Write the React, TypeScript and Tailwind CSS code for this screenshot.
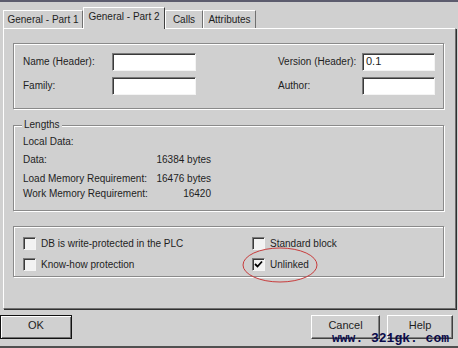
import React from "react";

const etched =
  "border border-[#8a8a8a] shadow-[1px_1px_0_#ffffff,inset_1px_1px_0_#ffffff]";
const sunken =
  "border border-t-[#7a7a7a] border-l-[#7a7a7a] border-b-[#f4f4f4] border-r-[#f4f4f4] shadow-[inset_1px_1px_0_#3a3a3a]";
const raised =
  "border border-b-[#404040] border-l-white border-r-[#404040] border-t-white bg-[#d0d0d0] shadow-[inset_-1px_-1px_0_#808080]";

const Field: React.FC<{ value?: string; className: string }> = ({ value, className }) => (
  <div className={`${sunken} ${className} h-[18px] bg-white px-[3px] leading-[15px] text-[11px]`}>
    {value}
  </div>
);

const Check: React.FC<{ label: string; checked?: boolean }> = ({ label, checked }) => (
  <div className="flex h-[13px] items-center gap-[5px]">
    <div className={`${sunken} flex h-[13px] w-[13px] items-center justify-center bg-[#f2f2f2]`}>
      {checked && (
        <svg width="9" height="9" viewBox="0 0 9 9">
          <path d="M1 4 L3.5 6.5 L8 1.5" stroke="#000" strokeWidth="1.8" fill="none" />
        </svg>
      )}
    </div>
    <span>{label}</span>
  </div>
);

const Tab: React.FC<{ label: string; active?: boolean; w: string }> = ({ label, active, w }) =>
  active ? (
    <div
      className={`${w} relative z-10 -mb-px flex h-[22px] items-start justify-center border border-b-0 border-l-white border-t-white border-r-[#404040] bg-[#d0d0d0] pt-[3px]`}
    >
      {label}
    </div>
  ) : (
    <div
      className={`${w} flex h-[18px] items-center justify-center border border-b-0 border-l-white border-t-white border-r-[#707070] bg-[#d0d0d0]`}
    >
      {label}
    </div>
  );

export default function App() {
  return (
    <div
      className="relative flex h-[348px] w-[458px] flex-col overflow-hidden bg-[#d0d0d0] text-[10px] leading-[12px] text-[#1e1e1e]"
      style={{ fontFamily: '"Liberation Sans", Arial, sans-serif' }}
    >
      <div className="h-[2px] bg-[#5c5c6e]" />
      <div className="h-[6px]" />

      {/* tabs */}
      <div className="flex h-[20px] items-end pl-[3px]">
        <Tab label="General - Part 1" w="w-[80px]" />
        <Tab label="General - Part 2" w="w-[82px]" active />
        <Tab label="Calls" w="w-[38px]" />
        <Tab label="Attributes" w="w-[53px]" />
      </div>

      {/* tab page */}
      <div className="ml-[3px] h-[281px] w-[453px] border border-b-[#707070] border-l-white border-r-[#707070] border-t-white px-[9px] pt-[14px] shadow-[1px_1px_0_#303030]">
        {/* header group */}
        <div className={`${etched} h-[66px] w-[431px] pl-[9px] pt-[9px]`}>
          <div className="grid grid-cols-[89px_84px_82px_84px_73px] gap-y-[6px]">
            <div className="flex items-center">Name (Header):</div>
            <Field className="w-[84px]" />
            <div />
            <div className="flex items-center">Version (Header):</div>
            <Field className="w-[73px]" value="0.1" />
            <div className="flex items-center">Family:</div>
            <Field className="w-[84px]" />
            <div />
            <div className="flex items-center">Author:</div>
            <Field className="w-[73px]" />
          </div>
        </div>

        {/* lengths group */}
        <div className={`${etched} relative mt-[16px] h-[86px] w-[431px] pl-[9px] pt-[10px]`}>
          <span className="absolute -top-[7px] left-[8px] bg-[#d0d0d0] px-[2px]">Lengths</span>
          <div className="h-[18px]">Local Data:</div>
          <div className="grid h-[19px] grid-cols-[130px_58px]">
            <span>Data:</span>
            <span className="text-right">16384 bytes</span>
          </div>
          <div className="grid h-[15px] grid-cols-[130px_58px]">
            <span>Load Memory Requirement:</span>
            <span className="text-right">16476 bytes</span>
          </div>
          <div className="grid grid-cols-[130px_58px]">
            <span>Work Memory Requirement:</span>
            <span className="text-right">16420</span>
          </div>
        </div>

        {/* options group */}
        <div className={`${etched} mt-[15px] h-[51px] w-[431px] pl-[9px] pt-[10px]`}>
          <div className="grid grid-cols-[229px_1fr] gap-y-[8px]">
            <Check label="DB is write-protected in the PLC" />
            <Check label="Standard block" />
            <Check label="Know-how protection" />
            <Check label="Unlinked" checked />
          </div>
        </div>
      </div>

      {/* buttons */}
      <div className="mt-[6px] flex h-[24px] items-stretch justify-between pr-[5px] text-[11px] leading-[13px]">
        <button className="w-[72px] border border-[#111] bg-[#d0d0d0] pb-[3px] shadow-[inset_1px_1px_0_#ffffff,inset_-1px_-1px_0_#707070]">
          OK
        </button>
        <div className="flex gap-[7px]">
          <button className={`${raised} w-[69px] pb-[4px]`}>Cancel</button>
          <button className={`${raised} w-[66px] pb-[4px]`}>Help</button>
        </div>
      </div>
      <div className="flex-1" />
      <div className="h-[2px] bg-[#505050]" />

      {/* red annotation ring */}
      <svg className="absolute left-[241px] top-[246px]" width="78" height="38" viewBox="0 0 78 38">
        <ellipse cx="39" cy="19" rx="37" ry="17" fill="none" stroke="#c83c3c" strokeWidth="1" />
      </svg>

      {/* watermark */}
      <div
        className="absolute left-[332px] top-[332px] text-[13px] font-bold leading-[14px] text-[#0a0a4a]"
        style={{ fontFamily: '"Liberation Mono", "Courier New", monospace' }}
      >
        www. 321gk. com
      </div>
    </div>
  );
}
